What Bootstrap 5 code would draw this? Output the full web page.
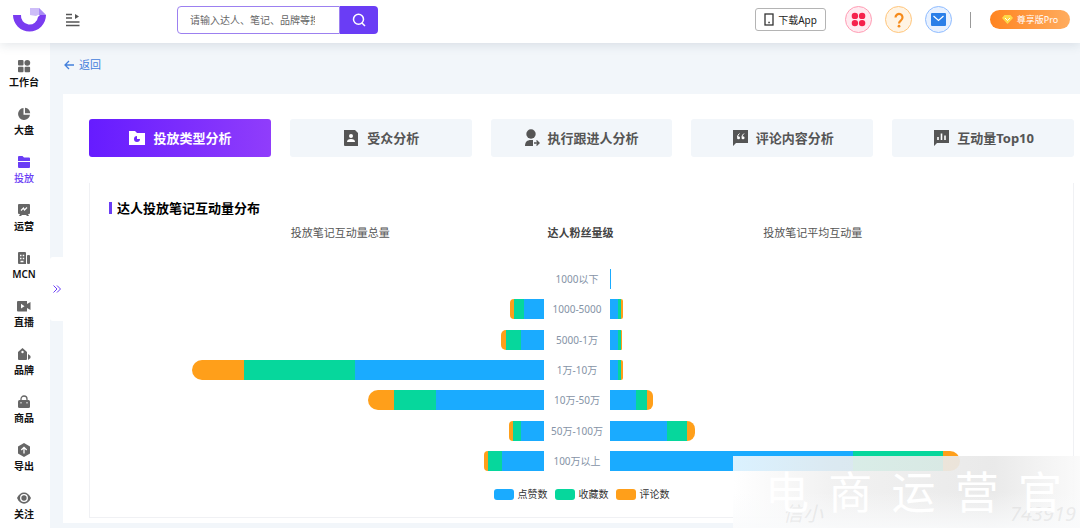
<!DOCTYPE html>
<html lang="zh-CN">
<head>
<meta charset="utf-8">
<meta name="viewport" content="width=device-width, initial-scale=1">
<title>投放类型分析</title>
<link href="https://cdn.jsdelivr.net/npm/bootstrap@5.3.0/dist/css/bootstrap.min.css" rel="stylesheet">
<style>
  :root { --brand: #6a3df5; --like: #1aabff; --fav: #06d79c; --cmt: #ff9f1a; }
  body { font-family: "Noto Sans", "Noto Sans CJK SC", sans-serif; font-size: 10px; line-height: 16px; background: #f2f6fa; color: #222; }
  svg { display: block; flex: none; }
  .topbar { height: 43px; background: #fff; box-shadow: 0 2px 10px rgba(60, 80, 100, .14); z-index: 3; padding: 0 10px 4px 13px; }
  .menu-btn { margin-left: 19px; }
  .plain-btn { border: 0; background: none; padding: 0; }
  .search { width: 201px; height: 28px; margin-left: 97px; }
  .search .form-control { font-size: 10px; line-height: 16px; padding: 0 24px 0 12px; border: 1px solid #9c80f0; border-radius: 4px 0 0 4px; min-height: 0; color: #555; }
  .search .form-control::placeholder { color: #666; opacity: 1; }
  .search .btn { width: 38px; padding: 0; background: var(--brand); border: 0; border-radius: 0 4px 4px 0; }
  .app-btn { width: 71px; height: 23px; padding: 0; font-size: 10px; line-height: 16px; border: 1px solid #b4b4b4; border-radius: 3px; color: #222; background: #fff; margin-right: 19px; }
  .round-btn { width: 27px; height: 27px; border: 1px solid; border-radius: 50%; padding: 0; margin-right: 13px; }
  .round-red { border-color: #ff9db4; background: #ffeaf0; }
  .round-orange { border-color: #ffc67c; background: #fff4e4; }
  .round-blue { border-color: #8fbcff; background: #e8f1ff; }
  .split { width: 1px; height: 16px; background: #999; margin: 0 19px 0 5px; }
  .pro-btn { width: 80px; height: 19px; padding: 0; border: 0; border-radius: 10px; color: #fff; font-size: 9px; line-height: 16px; background: linear-gradient(90deg, #ff8420, #ffac5e); }
  .side { width: 50px; background: #fff; padding: 16px 2px 0 0; gap: 16px; }
  .side a { color: #111; font-weight: 600; line-height: 18px; text-decoration: none; }
  .side a:lang(zh) { font-family: "Noto Sans", "Noto Sans CJK SC", sans-serif; }
  .side svg { color: #666; }
  .side a.active, .side a.active svg { color: var(--brand); }
  .side a.active { font-weight: 500; }
  .gutter { width: 13px; padding-top: 6px; }
  .handle { width: 13px; height: 64px; background: #fff; border: 0; border-radius: 3px 0 0 3px; padding: 0; color: var(--brand); }
  .back { color: #4380dc; font-size: 11px; line-height: 22px; text-decoration: none; }
  .page-main { padding: 11px 0 4px; }
  .sheet { background: #fff; margin-top: 18px; padding: 25px 6px 5px 26px; }
  .tabs { gap: 19px; }
  .tabs .btn { flex: 1 1 0; height: 38px; padding: 0; border: 0; border-radius: 3px; background: #f2f6fa; color: #555; font-size: 13px; line-height: 20px; font-weight: 700; gap: 7px; }
  .tabs .btn.active { color: #fff; background: linear-gradient(90deg, #661cff, #903dfb); }
  .panel { margin-top: 26px; padding: 15px 0; border: 1px solid #f0f1f4; border-top: 0; }
  .panel h2 { font-size: 13px; line-height: 20px; font-weight: 700; color: #000; margin: 0 0 5px 19px; gap: 5px; }
  .panel h2::before { content: ""; width: 3px; height: 12px; background: var(--brand); }
  .plot { display: grid; grid-template-columns: 1fr 66px 1fr; margin-right: 10px; }
  .plot h3 { font-size: 11px; line-height: 20px; font-weight: 400; color: #555; margin: 0 0 26px; text-align: center; white-space: nowrap; }
  .plot h3.mid { font-weight: 700; color: #444; padding-left: 4px; }
  .lead-in { padding-left: 47px; }
  .lead-out { padding-right: 47px; }
  .lane { height: 202px; }
  .lane > div { height: 20px; }
  .axis { color: #8593a6; line-height: 20px; white-space: nowrap; padding-left: 1px; }
  .like { background: var(--like); }
  .fav { background: var(--fav); }
  .cmt { background: var(--cmt); }
  .stack > i { flex-basis: 0; }
  .toward-left .cmt { border-radius: 10px 0 0 10px; }
  .toward-right .cmt { border-radius: 0 10px 10px 0; }
  .legend-row { gap: 7px; margin-top: 15px; color: #333; }
  .legend-row span { gap: 4px; }
  .legend-row i { width: 20px; height: 11px; border-radius: 3px; }
  .stamp { position: absolute; right: 0; bottom: 0; width: 347px; height: 72px; padding: 0 18px 0 32px; color: #fff; font-size: 44px; line-height: 72px; background: linear-gradient(180deg, rgba(255,255,255,0) 50%, rgba(250,251,252,.85)), linear-gradient(90deg, rgba(255,255,255,.84), rgba(240,240,240,.9) 28%, rgba(232,232,232,.93) 75%, rgba(250,250,250,.94)); pointer-events: none; }
  .stamp small { position: absolute; left: 50px; right: 4px; bottom: 3px; font-size: 20px; line-height: 22px; font-style: italic; color: rgba(190, 190, 190, .25); }
  .stamp span { position: relative; }
</style>
</head>
<body class="d-flex flex-column min-vh-100 position-relative overflow-x-hidden">

<header class="topbar d-flex align-items-center position-relative">
  <a href="#" aria-label="首页"><svg width="34" height="26" viewBox="0 0 34 26"><path d="M0 8h8a8.500 8.500 0 0 0 17 2l2-2h6a16.500 16.500 0 0 1-33 0z" fill="#7a3cf0"/><path d="M17 1h9l7 7h-8l-2 1-6-1z" fill="#cdbdf8"/><path d="M26 1l7 7h-7z" fill="#a98cf5"/></svg></a>
  <button class="menu-btn plain-btn" aria-label="菜单"><svg width="14" height="14" viewBox="0 0 14 14" stroke="#555" stroke-width="1.300"><path d="M0 1.500h6M0 5h6M0 9h13.500M0 12.500h13.500"/><path d="M9 1l4 2.500L9 6z" fill="#555" stroke="none"/></svg></button>
  <form class="search d-flex">
    <input class="form-control" type="text" placeholder="请输入达人、笔记、品牌等搜索" aria-label="搜索">
    <button class="btn d-flex align-items-center justify-content-center flex-shrink-0" type="button" aria-label="搜索"><svg width="14" height="14" viewBox="0 0 14 14" fill="none" stroke="#fff" stroke-width="1.500"><circle cx="6.500" cy="6.200" r="5"/><path d="M10 10l3 3"/></svg></button>
  </form>
  <div class="d-flex align-items-center ms-auto">
    <button class="app-btn d-flex align-items-center justify-content-center gap-1"><svg width="10" height="13" viewBox="0 0 10 13" fill="none" stroke="#333" stroke-width="1.300"><rect x="1" y="1" width="8" height="11"/><path d="M4.300 9.500h1.500"/></svg>下载App</button>
    <button class="round-btn round-red d-flex align-items-center justify-content-center" aria-label="应用"><svg width="15" height="15" viewBox="0 0 15 15" fill="#f5224d"><circle cx="3.900" cy="3.900" r="3.200"/><circle cx="11.100" cy="3.900" r="3.200"/><circle cx="3.900" cy="11.100" r="3.200"/><circle cx="11.100" cy="11.100" r="3.200"/></svg></button>
    <button class="round-btn round-orange d-flex align-items-center justify-content-center" aria-label="帮助"><svg width="12" height="16" viewBox="0 0 12 16"><path d="M2.500 5.500a3.500 3.500 0 1 1 5.500 2.800C6.500 9.400 6 9.800 6 11.500" fill="none" stroke="#f58b1b" stroke-width="2.200"/><circle cx="6" cy="14.200" r="1.400" fill="#f58b1b"/></svg></button>
    <button class="round-btn round-blue d-flex align-items-center justify-content-center" aria-label="消息"><svg width="15" height="13" viewBox="0 0 15 13"><rect width="15" height="13" rx="1" fill="#2b7fe8"/><path d="M2.500 3l5 4.500 5-4.500" fill="none" stroke="#fff" stroke-width="1.200"/></svg></button>
    <span class="split"></span>
    <button class="pro-btn d-flex align-items-center justify-content-center gap-1"><svg width="11" height="9" viewBox="0 0 11 9"><path d="M2.500 0h6L11 3 5.500 9 0 3z" fill="#ffd84a"/><path d="M3 3l2.500 2.500L8 3" fill="none" stroke="#fff" stroke-width="1"/></svg>尊享版Pro</button>
  </div>
</header>

<div class="d-flex flex-grow-1">
  <nav class="side d-flex flex-column flex-shrink-0 text-center">
    <a href="#"><svg class="mx-auto" width="14" height="14" viewBox="0 0 14 14" fill="currentColor"><rect x="1" y="1" width="5.500" height="5.500" rx="1"/><circle cx="10.300" cy="3.800" r="2.900"/><rect x="1" y="7.800" width="5.500" height="5.500" rx="1"/><rect x="7.600" y="7.800" width="5.500" height="5.500" rx="1"/></svg>工作台</a>
    <a href="#"><svg class="mx-auto" width="14" height="14" viewBox="0 0 14 14" fill="currentColor"><path d="M6.500 1a6 6 0 1 0 6.500 6.700H6.500z"/><path d="M8 .8v5.400h5.200A6 6 0 0 0 8 .8z"/></svg>大盘</a>
    <a href="#" class="active"><svg class="mx-auto" width="14" height="14" viewBox="0 0 14 14" fill="currentColor"><path d="M1 2a1 1 0 0 1 1-1h3.500L7 2.500h5a1 1 0 0 1 1 1V6H1z"/><path d="M1 7h12v5a1 1 0 0 1-1 1H2a1 1 0 0 1-1-1z"/></svg>投放</a>
    <a href="#"><svg class="mx-auto" width="14" height="14" viewBox="0 0 14 14"><path d="M2 1h10a1 1 0 0 1 1 1v8a1 1 0 0 1-1 1h-1l1 2h-2l-1-1H5l-1 1H2l1-2H2a1 1 0 0 1-1-1V2a1 1 0 0 1 1-1z" fill="currentColor"/><path d="M4 7.500L6.500 5l1 2L10 4.500" fill="none" stroke="#fff" stroke-width="1.200"/></svg>运营</a>
    <a href="#"><svg class="mx-auto" width="14" height="14" viewBox="0 0 14 14" fill="currentColor"><path d="M2 1h6a1 1 0 0 1 1 1v11H2a1 1 0 0 1-1-1V2a1 1 0 0 1 1-1z"/><rect x="10" y="4" width="3" height="9" rx="1"/><path d="M3 4.500h1.500M5.700 4.500h1.500M3 7.500h1.500M5.700 7.500h1.500M3.500 10.500h3" stroke="#fff" stroke-width="1.300"/></svg>MCN</a>
    <a href="#"><svg class="mx-auto" width="14" height="14" viewBox="0 0 14 14" fill="currentColor"><path d="M1 2h9v3l3.500-2v8L10 9v3.500H1a1 1 0 0 1-1-1V3a1 1 0 0 1 1-1z"/><path d="M4 4.800l3.500 2.400L4 9.600z" fill="#fff"/></svg>直播</a>
    <a href="#"><svg class="mx-auto" width="14" height="14" viewBox="0 0 14 14" fill="currentColor"><path d="M5.500 1L10 5v7a1 1 0 0 1-1 1H2a1 1 0 0 1-1-1V5z"/><circle cx="5.500" cy="5" r="1.200" fill="#fff"/><path d="M11 7l2.500 2v2L11 13z"/></svg>品牌</a>
    <a href="#"><svg class="mx-auto" width="14" height="14" viewBox="0 0 14 14"><path d="M4 6V4a3 3 0 0 1 6 0v2" fill="none" stroke="currentColor" stroke-width="1.300"/><rect x="1" y="5" width="12" height="8" rx="1.500" fill="currentColor"/><path d="M4 7v1.500M10 7v1.500" stroke="#fff"/></svg>商品</a>
    <a href="#"><svg class="mx-auto" width="14" height="14" viewBox="0 0 14 14"><path d="M7 0l6 3.500v7L7 14l-6-3.500v-7z" fill="currentColor"/><path d="M7 10.500V5M4.300 7L7 4.300 9.700 7" fill="none" stroke="#fff" stroke-width="1.300"/></svg>导出</a>
    <a href="#"><svg class="mx-auto" width="14" height="14" viewBox="0 0 14 14"><path d="M0 7c3-7.500 11-7.500 14 0-3 7.500-11 7.500-14 0z" fill="currentColor"/><circle cx="7" cy="7" r="3.300" fill="none" stroke="#fff" stroke-width="1.300"/></svg>关注</a>
  </nav>
  <div class="gutter d-flex align-items-center flex-shrink-0">
    <button class="handle d-flex align-items-center justify-content-center" aria-label="展开"><svg width="8" height="8" viewBox="0 0 8 8" fill="none" stroke="currentColor"><path d="M.5 .5L4 4 .5 7.500M4 .5L7.500 4 4 7.500"/></svg></button>
  </div>

  <main class="page-main flex-grow-1">
    <a href="#" class="back d-inline-flex align-items-center gap-1"><svg width="12" height="10" viewBox="0 0 12 10" fill="none" stroke="currentColor" stroke-width="1.300"><path d="M11 5H2M6 1L2 5l4 4"/></svg>返回</a>
    <section class="sheet">
      <div class="tabs d-flex">
        <button class="btn active d-flex align-items-center justify-content-center"><svg width="18" height="16" viewBox="0 0 18 16"><path d="M1 1h6l2 2h8v12H1z" fill="#fff"/><path d="M9 6a3 3 0 1 0 3 3H9z" fill="#6f28fd"/></svg>投放类型分析</button>
        <button class="btn d-flex align-items-center justify-content-center"><svg width="18" height="16" viewBox="0 0 18 16"><path d="M2 0h11l3 3v13H3a1 1 0 0 1-1-1z" fill="#555"/><circle cx="9" cy="6" r="2" fill="#fff"/><path d="M5 12a4 3 0 0 1 8 0z" fill="#fff"/></svg>受众分析</button>
        <button class="btn d-flex align-items-center justify-content-center"><svg width="16" height="18" viewBox="0 0 16 18"><circle cx="7" cy="5" r="4.700" fill="#555"/><path d="M1 17c0-4 2-6 6-6h2v6z" fill="#555"/><path d="M10 14h5M12.500 11.500L15 14l-2.500 2.500" fill="none" stroke="#555" stroke-width="1.400"/></svg>执行跟进人分析</button>
        <button class="btn d-flex align-items-center justify-content-center"><svg width="18" height="16" viewBox="0 0 18 16"><path d="M2 0h15v13H5l-3 3z" fill="#555"/><path d="M8.500 3.500Q6.500 5 6.500 7M13 3.500Q11 5 11 7" stroke="#fff" fill="none"/><circle cx="7.500" cy="7.700" r="1.500" fill="#fff"/><circle cx="12" cy="7.700" r="1.500" fill="#fff"/></svg>评论内容分析</button>
        <button class="btn d-flex align-items-center justify-content-center"><svg width="18" height="16" viewBox="0 0 18 16"><path d="M2 0h15v13H5l-3 3z" fill="#555"/><path d="M6 10V7M9.500 10V3.500M13 10V5.500" stroke="#fff" stroke-width="1.600"/></svg>互动量Top10</button>
      </div>
      <div class="panel">
        <h2 class="d-flex align-items-center">达人投放笔记互动量分布</h2>
        <div class="plot">
          <h3 class="lead-in">投放笔记互动量总量</h3>
          <h3 class="mid">达人粉丝量级</h3>
          <h3 class="lead-out">投放笔记平均互动量</h3>

          <div class="lane toward-left d-flex flex-column justify-content-between align-items-end">
            <div></div>
            <div class="stack d-flex" style="width:7.5%"><i class="cmt" style="flex-grow:4"></i><i class="fav" style="flex-grow:10"></i><i class="like" style="flex-grow:20"></i></div>
            <div class="stack d-flex" style="width:9.4%"><i class="cmt" style="flex-grow:5"></i><i class="fav" style="flex-grow:15"></i><i class="like" style="flex-grow:23"></i></div>
            <div class="stack d-flex" style="width:77.5%"><i class="cmt" style="flex-grow:52"></i><i class="fav" style="flex-grow:111"></i><i class="like" style="flex-grow:189"></i></div>
            <div class="stack d-flex" style="width:38.7%"><i class="cmt" style="flex-grow:26"></i><i class="fav" style="flex-grow:42"></i><i class="like" style="flex-grow:107"></i></div>
            <div class="stack d-flex" style="width:7.7%"><i class="cmt" style="flex-grow:4"></i><i class="fav" style="flex-grow:8"></i><i class="like" style="flex-grow:23"></i></div>
            <div class="stack d-flex" style="width:13.2%"><i class="cmt" style="flex-grow:4"></i><i class="fav" style="flex-grow:14"></i><i class="like" style="flex-grow:42"></i></div>
          </div>
          <div class="lane axis text-center d-flex flex-column justify-content-between">
            <div>1000以下</div><div>1000-5000</div><div>5000-1万</div><div>1万-10万</div><div>10万-50万</div><div>50万-100万</div><div>100万以上</div>
          </div>
          <div class="lane toward-right d-flex flex-column justify-content-between align-items-start">
            <div class="stack d-flex" style="width:.4%"><i class="like" style="flex-grow:2"></i></div>
            <div class="stack d-flex" style="width:2.9%"><i class="like" style="flex-grow:8"></i><i class="fav" style="flex-grow:3"></i><i class="cmt" style="flex-grow:2"></i></div>
            <div class="stack d-flex" style="width:2.7%"><i class="like" style="flex-grow:8"></i><i class="fav" style="flex-grow:3"></i><i class="cmt" style="flex-grow:1"></i></div>
            <div class="stack d-flex" style="width:3%"><i class="like" style="flex-grow:8"></i><i class="fav" style="flex-grow:3"></i><i class="cmt" style="flex-grow:2"></i></div>
            <div class="stack d-flex" style="width:9.7%"><i class="like" style="flex-grow:27"></i><i class="fav" style="flex-grow:11"></i><i class="cmt" style="flex-grow:6"></i></div>
            <div class="stack d-flex" style="width:18.8%"><i class="like" style="flex-grow:57"></i><i class="fav" style="flex-grow:20"></i><i class="cmt" style="flex-grow:8"></i></div>
            <div class="stack d-flex" style="width:77.3%"><i class="like" style="flex-grow:243"></i><i class="fav" style="flex-grow:90"></i><i class="cmt" style="flex-grow:17"></i></div>
          </div>
        </div>
        <div class="legend-row d-flex justify-content-center">
          <span class="d-flex align-items-center"><i class="like"></i>点赞数</span>
          <span class="d-flex align-items-center"><i class="fav"></i>收藏数</span>
          <span class="d-flex align-items-center"><i class="cmt"></i>评论数</span>
        </div>
      </div>
    </section>
  </main>
</div>

<div class="stamp d-flex justify-content-between"><small class="d-flex justify-content-between"><i>信小</i><i>743919</i></small><span>电</span><span>商</span><span>运</span><span>营</span><span>官</span></div>

<script src="https://cdn.jsdelivr.net/npm/bootstrap@5.3.0/dist/js/bootstrap.bundle.min.js"></script>
</body>
</html>
